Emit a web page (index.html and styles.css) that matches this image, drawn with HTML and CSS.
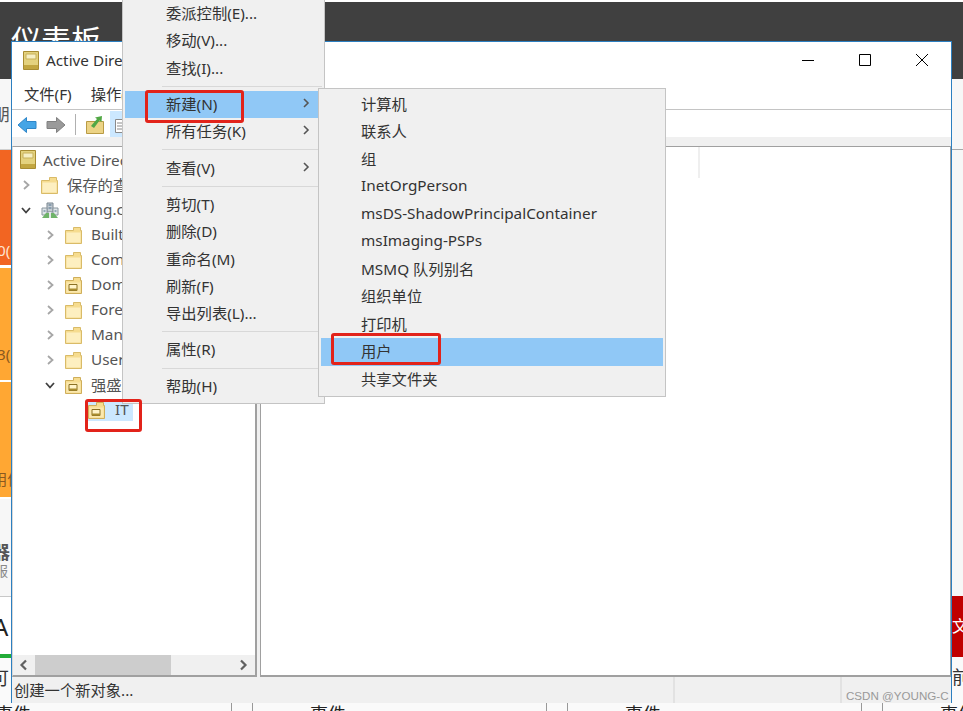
FILE: index.html
```html
<!DOCTYPE html>
<html lang="zh-CN">
  <head>
    <meta charset="UTF-8" />
    <title>Active Directory 用户和计算机</title>
    <link rel="stylesheet" href="styles.css">
  </head>
  <body>
    <svg class="defs" width="0" height="0">
      <symbol id="i-folder" viewBox="0 0 18 18">
        <path d="M.5 4.500H8.500V1.500H15.500V4.500H16.500V17.500H.5Z" fill="#f6dc8f" stroke="#d9bb68" />
        <path d="M1.500 6.500H15.500V16.500H1.500Z" fill="#fdefc0" />
      </symbol>
      <symbol id="i-ou" viewBox="0 0 18 18">
        <path d="M.5 4.500H8.500V1.500H15.500V4.500H16.500V17.500H.5Z" fill="#f6dc8f" stroke="#cfae5a" />
        <path d="M1.500 6.500H15.500V16.500H1.500Z" fill="#fbe8ae" />
        <path d="M4 8.500H12V14.500H4Z" fill="#fff3c8" stroke="#8a7022" />
        <path d="M4 12.500H12V14.500H4Z" fill="#a98c2e" />
      </symbol>
      <symbol id="i-book" viewBox="0 0 16 19">
        <path d="M.5 .5H15.500V18.500H.5Z" fill="#e4d27e" stroke="#a88c32" />
        <path d="M3 3H13V8H3Z" fill="#f6efc4" stroke="#c7b05a" />
        <path d="M1 14H15V18H1Z" fill="#c2a640" />
      </symbol>
      <symbol id="i-domain" viewBox="0 0 18 18">
        <path d="M6 2H12V11H6Z" fill="#c5ccd2" stroke="#79858f" />
        <path d="M1 7H6V14H1ZM12 7H17V14H12Z" fill="#dfe5e8" stroke="#8b979f" />
        <path d="M7.500 4H10.500M7.500 7H10.500M2.500 10H4.500M13.500 10H15.500" stroke="#4d6f8a" />
        <path d="M1 17L5 12H13L17 17Z" fill="#6fb36a" />
        <path d="M8 11H10V17H8Z" fill="#e4e8ea" />
      </symbol>
    </svg>

    <div class="desktop">
      <!-- page behind the window, only the edges show -->
      <div class="page">
        <div class="page-top"></div>
        <div class="page-head"><span class="page-title">仪表板</span></div>
        <div class="page-main">
          <div class="strip">
            <div class="block block-light"><span class="edge-text edge-nav">朋</span></div>
            <div class="block block-red"><span class="edge-text edge-white">0(</span></div>
            <div class="block block-orange"><span class="edge-text edge-brown">3(</span></div>
            <div class="block block-orange block-last"><span class="edge-text edge-brown">用信</span></div>
            <div class="block block-server">
              <span class="edge-server">器</span>
              <span class="edge-service">服</span>
            </div>
            <div class="block block-count">
              <span class="edge-count">A</span>
            </div>
            <div class="block block-link"><span class="edge-link">可</span></div>
          </div>
          <div class="strip">
            <div class="block block-light block-ruled"></div>
            <div class="block block-side"></div>
            <div class="block block-alert"><span class="edge-alert">文</span></div>
            <div class="block block-link"><span class="edge-link edge-link-right">前</span></div>
          </div>
        </div>
        <div class="page-bottom">
          <div class="event"><span class="event-text">事件</span><i></i><i></i></div>
          <div class="event"><span class="event-text">事件</span><i></i><i></i></div>
          <div class="event"><span class="event-text">事件</span><i></i><i></i></div>
          <div class="event"><span class="event-text">事件</span></div>
        </div>
      </div>

      <div class="window">
        <div class="titlebar">
          <svg class="title-icon"><use href="#i-book" /></svg>
          <span class="title-text">Active Directory 用户和计算机</span>
          <div class="controls">
            <svg class="control" viewBox="0 0 14 14"><path d="M1 7.500H13" stroke="#000" /></svg>
            <svg class="control" viewBox="0 0 14 14"><path d="M1.500 1.500H12.500V12.500H1.500Z" fill="none" stroke="#000" /></svg>
            <svg class="control" viewBox="0 0 14 14"><path d="M1 1L13 13M13 1L1 13" stroke="#000" /></svg>
          </div>
        </div>
        <div class="menubar">
          <span>文件(F)</span>
          <span>操作(A)</span>
          <span>查看(V)</span>
          <span>帮助(H)</span>
        </div>
        <div class="toolbar">
          <svg class="tool" viewBox="0 0 20 18"><path d="M1 9L9.500 1.500V5.500H19V12.500H9.500V16.500Z" fill="#45a5e6" stroke="#2f86c8" stroke-linejoin="round" /></svg>
          <svg class="tool" viewBox="0 0 20 18"><path d="M19 9L10.500 1.500V5.500H1V12.500H10.500V16.500Z" fill="#9a9a9a" stroke="#808080" stroke-linejoin="round" /></svg>
          <span class="tool-sep"></span>
          <svg class="tool tool-up" viewBox="0 0 20 20">
            <path d="M1.500 6.500H18.500V18.500H1.500Z" fill="#ecd385" stroke="#b99b45" />
            <path d="M6 11L12 4L10 2.500L17 1L16.500 7L14.500 5.500L9 13Z" fill="#52a845" />
          </svg>
          <span class="tool-active">
            <svg class="tool-list" viewBox="0 0 12 18"><path d="M1.500 3.500H12V16.500H1.500ZM3 7H12M3 10H12M3 13H12" fill="#fff" stroke="#8a8a8a" /></svg>
          </span>
        </div>
        <div class="toolband"></div>
        <div class="panes">
          <div class="pane-left">
            <div class="tree">
              <div class="row row-root">
                <svg class="node-book"><use href="#i-book" /></svg>
                <span>Active Directory 用户和计算机</span>
              </div>
              <div class="row row-one">
                <svg class="chev" viewBox="0 0 12 12"><path d="M4 2L8.500 6L4 10" class="chev-closed" /></svg>
                <svg class="node"><use href="#i-folder" /></svg>
                <span>保存的查询</span>
              </div>
              <div class="row row-one">
                <svg class="chev" viewBox="0 0 12 12"><path d="M2 4L6 8.500L10 4" class="chev-open" /></svg>
                <svg class="node"><use href="#i-domain" /></svg>
                <span>Young.com</span>
              </div>
              <div class="row row-two">
                <svg class="chev" viewBox="0 0 12 12"><path d="M4 2L8.500 6L4 10" class="chev-closed" /></svg>
                <svg class="node"><use href="#i-folder" /></svg>
                <span>Builtin</span>
              </div>
              <div class="row row-two">
                <svg class="chev" viewBox="0 0 12 12"><path d="M4 2L8.500 6L4 10" class="chev-closed" /></svg>
                <svg class="node"><use href="#i-folder" /></svg>
                <span>Computers</span>
              </div>
              <div class="row row-two">
                <svg class="chev" viewBox="0 0 12 12"><path d="M4 2L8.500 6L4 10" class="chev-closed" /></svg>
                <svg class="node"><use href="#i-ou" /></svg>
                <span>Domain Controllers</span>
              </div>
              <div class="row row-two">
                <svg class="chev" viewBox="0 0 12 12"><path d="M4 2L8.500 6L4 10" class="chev-closed" /></svg>
                <svg class="node"><use href="#i-folder" /></svg>
                <span>ForeignSecurity</span>
              </div>
              <div class="row row-two">
                <svg class="chev" viewBox="0 0 12 12"><path d="M4 2L8.500 6L4 10" class="chev-closed" /></svg>
                <svg class="node"><use href="#i-folder" /></svg>
                <span>Managed</span>
              </div>
              <div class="row row-two">
                <svg class="chev" viewBox="0 0 12 12"><path d="M4 2L8.500 6L4 10" class="chev-closed" /></svg>
                <svg class="node"><use href="#i-folder" /></svg>
                <span>Users</span>
              </div>
              <div class="row row-two">
                <svg class="chev" viewBox="0 0 12 12"><path d="M2 4L6 8.500L10 4" class="chev-open" /></svg>
                <svg class="node"><use href="#i-ou" /></svg>
                <span>强盛集团</span>
              </div>
              <div class="row row-three">
                <div class="row-selected">
                  <svg class="node"><use href="#i-ou" /></svg>
                  <span>IT</span>
                </div>
              </div>
            </div>
            <div class="scrollbar">
              <svg class="scroll-arrow" viewBox="0 0 12 12"><path d="M8 1.500L3.500 6L8 10.500" /></svg>
              <div class="scroll-thumb"></div>
              <svg class="scroll-arrow scroll-arrow-right" viewBox="0 0 12 12"><path d="M4 1.500L8.500 6L4 10.500" /></svg>
            </div>
          </div>
          <div class="pane-right">
            <div class="list-head"><div class="list-col"></div></div>
          </div>
        </div>
        <div class="statusbar">
          <div class="status-cell status-main">创建一个新对象...</div>
          <div class="status-cell status-mid"></div>
          <div class="status-cell status-end"><span class="watermark">CSDN @YOUNG-C</span></div>
        </div>
      </div>

      <div class="menu menu-main">
        <div class="item">委派控制(E)...</div>
        <div class="item">移动(V)...</div>
        <div class="item">查找(I)...</div>
        <div class="sep"></div>
        <div class="item item-on">新建(N)<svg class="sub" viewBox="0 0 8 12"><path d="M2 2L6 6L2 10" /></svg></div>
        <div class="item">所有任务(K)<svg class="sub" viewBox="0 0 8 12"><path d="M2 2L6 6L2 10" /></svg></div>
        <div class="sep"></div>
        <div class="item">查看(V)<svg class="sub" viewBox="0 0 8 12"><path d="M2 2L6 6L2 10" /></svg></div>
        <div class="sep"></div>
        <div class="item">剪切(T)</div>
        <div class="item">删除(D)</div>
        <div class="item">重命名(M)</div>
        <div class="item">刷新(F)</div>
        <div class="item">导出列表(L)...</div>
        <div class="sep"></div>
        <div class="item">属性(R)</div>
        <div class="sep"></div>
        <div class="item">帮助(H)</div>
      </div>

      <div class="menu menu-sub">
        <div class="item">计算机</div>
        <div class="item">联系人</div>
        <div class="item">组</div>
        <div class="item">InetOrgPerson</div>
        <div class="item">msDS-ShadowPrincipalContainer</div>
        <div class="item">msImaging-PSPs</div>
        <div class="item">MSMQ 队列别名</div>
        <div class="item">组织单位</div>
        <div class="item">打印机</div>
        <div class="item item-on">用户</div>
        <div class="item">共享文件夹</div>
      </div>

      <div class="mark mark-new"></div>
      <div class="mark mark-user"></div>
      <div class="mark mark-it"></div>
    </div>
  </body>
</html>
```

FILE: styles.css
```css
* {
  box-sizing: border-box;
}
body {
  margin: 0;
  font-family: "Noto Sans", "Noto Sans CJK SC", sans-serif;
  font-size: 15.3px;
  color: #333;
}
.defs {
  position: absolute;
}
.desktop {
  position: relative;
  width: 963px;
  height: 711px;
  overflow: hidden;
  background: #fff;
}

/* page behind */
.page {
  display: flex;
  flex-direction: column;
  height: 711px;
}
.page-top {
  height: 2px;
  background: #fff;
}
.page-head {
  height: 77px;
  padding: 23px 0 0 11px;
  background: #404040;
}
.page-title {
  display: block;
  font-size: 30px;
  line-height: 30px;
  color: #fff;
}
.page-main {
  display: flex;
  justify-content: space-between;
  height: 624px;
}
.strip {
  display: flex;
  flex-direction: column;
  width: 11px;
  overflow: hidden;
  white-space: nowrap;
}
.block {
  flex-shrink: 0;
  border-bottom: 2px solid #fff;
}
.block-light {
  height: 71px;
  padding-top: 26px;
  background: #f7f7f7;
  border-bottom: 1px solid #d0d0d0;
}
.block-ruled {
  height: 71px;
  border-bottom: 1px solid #a8a8a8;
}
.block-red {
  height: 118px;
  padding-top: 90px;
  background: #f26522;
  border-bottom: 3px solid #fff;
}
.block-orange {
  height: 114px;
  background: #ffa733;
  padding-top: 76px;
}
.block-last {
  height: 117px;
  padding-top: 87px;
}
.block-server {
  height: 98px;
  padding-top: 43px;
  background: #f7f7f7;
  border-bottom: 1px solid #c8c8c8;
}
.block-count {
  height: 61px;
  padding-top: 15px;
  background: #fff;
  border-bottom: 4px solid #22ac38;
}
.block-link {
  height: 46px;
  padding-top: 8px;
  background: #fafafa;
  border: 0;
}
.block-side {
  height: 446px;
  background: #f7f7f7;
  border: 0;
}
.block-alert {
  height: 61px;
  padding-top: 20px;
  background: #c00000;
  border: 0;
}
.edge-text {
  display: block;
  line-height: 20px;
}
.edge-nav {
  margin-left: -7px;
  font-size: 17px;
  color: #555;
}
.edge-white {
  margin-left: -3px;
  color: #ffe3cf;
}
.edge-brown {
  margin-left: -3px;
  color: #8a5a20;
}
.block-last .edge-brown {
  margin-left: -8px;
}
.edge-server {
  display: block;
  margin-left: -8px;
  font-size: 18px;
  line-height: 20px;
  font-weight: 700;
  color: #555;
}
.edge-service {
  display: block;
  margin-left: -6px;
  font-size: 14px;
  line-height: 18px;
  color: #888;
}
.edge-count {
  display: block;
  margin-left: -7px;
  font-size: 24px;
  line-height: 30px;
  color: #222;
}
.edge-link {
  display: block;
  margin-left: -9px;
  font-size: 18px;
  line-height: 24px;
  color: #333;
}
.edge-link-right {
  margin-left: 0;
}
.edge-alert {
  display: block;
  font-size: 16px;
  line-height: 20px;
  color: #fff;
}
.page-bottom {
  display: flex;
  height: 8px;
  overflow: hidden;
  background: #fafafa;
}
.event {
  display: flex;
  flex: 0 0 315px;
  font-size: 18px;
  line-height: 24px;
  color: #222;
}
.event-text {
  flex: 0 0 236px;
  margin: -1px 0 0 -5px;
}
.event i {
  display: block;
  flex: 0 0 21px;
  border-left: 1px solid #999;
}
.event i:last-child {
  flex-basis: 63px;
}

/* window */
.window {
  position: absolute;
  left: 11px;
  top: 41px;
  width: 941px;
  height: 662px;
  display: flex;
  flex-direction: column;
  border: 1px solid #2c7fc0;
  border-bottom: 0;
  background: #f0f0f0;
}
.titlebar {
  display: flex;
  align-items: center;
  height: 40px;
  padding: 0 0 4px 11px;
  background: #fff;
  color: #333;
}
.title-icon {
  width: 16px;
  height: 19px;
  margin-right: 7px;
}
.title-text {
  flex: 1;
  padding-bottom: 3px;
}
.controls {
  display: flex;
  gap: 43px;
  margin-right: 22px;
}
.control {
  width: 14px;
  height: 14px;
}
.menubar {
  display: flex;
  align-items: center;
  gap: 19px;
  height: 28px;
  padding: 0 0 6px 12px;
  background: #fff;
  border-bottom: 1px solid #c4c4c4;
}
.toolbar {
  display: flex;
  align-items: center;
  height: 27px;
  padding: 2px 0 0 5px;
  background: #fff;
}
.tool {
  width: 20px;
  height: 18px;
  margin-right: 9px;
}
.tool-sep {
  width: 1px;
  height: 21px;
  margin-right: 9px;
  background: #b0b0b0;
}
.tool-up {
  height: 20px;
  margin-right: 5px;
}
.tool-active {
  display: flex;
  align-items: center;
  width: 30px;
  height: 27px;
  padding-left: 4px;
  background: #cce8ff;
}
.tool-list {
  width: 12px;
  height: 18px;
}
.toolband {
  height: 9px;
  background: #f0f0f0;
}
.panes {
  flex: 1;
  display: flex;
  gap: 3px;
  min-height: 0;
}
.pane-left {
  display: flex;
  flex-direction: column;
  width: 245px;
  background: #fff;
  border: solid #a0a0a0;
  border-width: 1px 2px 2px 1px;
  border-left-color: #d8d8d8;
}
.tree {
  flex: 1;
  color: #555;
  white-space: nowrap;
  overflow: hidden;
}
.row {
  display: flex;
  align-items: center;
  height: 25.1px;
}
.row span {
  padding-bottom: 2px;
}
.row-root {
  padding-left: 7px;
}
.row-one {
  padding-left: 7px;
}
.row-two {
  padding-left: 31px;
}
.row-three {
  padding-left: 75px;
}
.row-selected {
  display: flex;
  align-items: center;
  width: 45px;
  height: 22px;
  background: #cce8ff;
}
.node-book {
  width: 16px;
  height: 19px;
  margin-right: 7px;
}
.node {
  width: 18px;
  height: 18px;
  margin-right: 8px;
}
.row-three .node {
  margin-right: 9px;
}
.chev {
  width: 12px;
  height: 12px;
  margin-right: 9px;
  fill: none;
  stroke-width: 1.8;
}
.chev-closed {
  stroke: #a6a6a6;
}
.chev-open {
  stroke: #404040;
}
.scrollbar {
  display: flex;
  align-items: center;
  height: 20px;
  flex-shrink: 0;
  background: #f0f0f0;
}
.scroll-arrow {
  width: 12px;
  height: 12px;
  margin: 0 5px;
  fill: none;
  stroke: #606060;
  stroke-width: 2.2;
}
.scroll-arrow-right {
  margin-right: 6px;
}
.scroll-thumb {
  width: 136px;
  height: 20px;
  margin-right: auto;
  background: #cdcdcd;
}
.pane-right {
  flex: 1;
  background: #fff;
  border: 1px solid #a0a0a0;
  border-bottom-width: 2px;
}
.list-head {
  height: 31px;
}
.list-col {
  width: 439px;
  height: 100%;
  border-right: 2px solid #efefef;
}
.statusbar {
  display: flex;
  height: 26px;
  background: #f0f0f0;
}
.status-cell {
  display: flex;
  align-items: center;
  border-right: 2px solid #e2e2e2;
}
.status-main {
  width: 663px;
  padding: 0 0 2px 2px;
}
.status-mid {
  width: 167px;
}
.status-end {
  flex: 1;
  min-width: 0;
  border: 0;
  align-items: flex-end;
  padding: 0 0 0 4px;
}
.watermark {
  font-family: "Liberation Sans", sans-serif;
  font-size: 11.6px;
  line-height: 14px;
  color: #999;
  white-space: nowrap;
}

/* context menus */
.menu {
  position: absolute;
  background: #f0f0f0;
  border: 1px solid #c4c4c4;
  white-space: nowrap;
}
.menu-main {
  left: 122px;
  top: -1px;
  width: 203px;
  height: 405px;
  padding: 0 2px;
}
.menu-sub {
  left: 318px;
  top: 88px;
  width: 348px;
  height: 309px;
  padding: 1.5px 2px;
}
.item {
  display: flex;
  align-items: center;
  justify-content: space-between;
  height: 27.3px;
  padding: 0 12px 3px 41px;
}
.menu-sub .item {
  height: 27.5px;
  padding-left: 40px;
}
.item-on {
  background: #90c8f6;
}
.sep {
  height: 1px;
  margin: 4px 0 4px 37px;
  background: #d8d8d8;
}
.sub {
  width: 8px;
  height: 12px;
  fill: none;
  stroke: #555;
  stroke-width: 1.6;
}

/* red annotation boxes */
.mark {
  position: absolute;
  border: 3px solid #e2231a;
  border-radius: 3px;
}
.mark-new {
  left: 145px;
  top: 90px;
  width: 99px;
  height: 33px;
}
.mark-user {
  left: 331px;
  top: 333px;
  width: 110px;
  height: 32px;
}
.mark-it {
  left: 85px;
  top: 399px;
  width: 57px;
  height: 33px;
}
```
